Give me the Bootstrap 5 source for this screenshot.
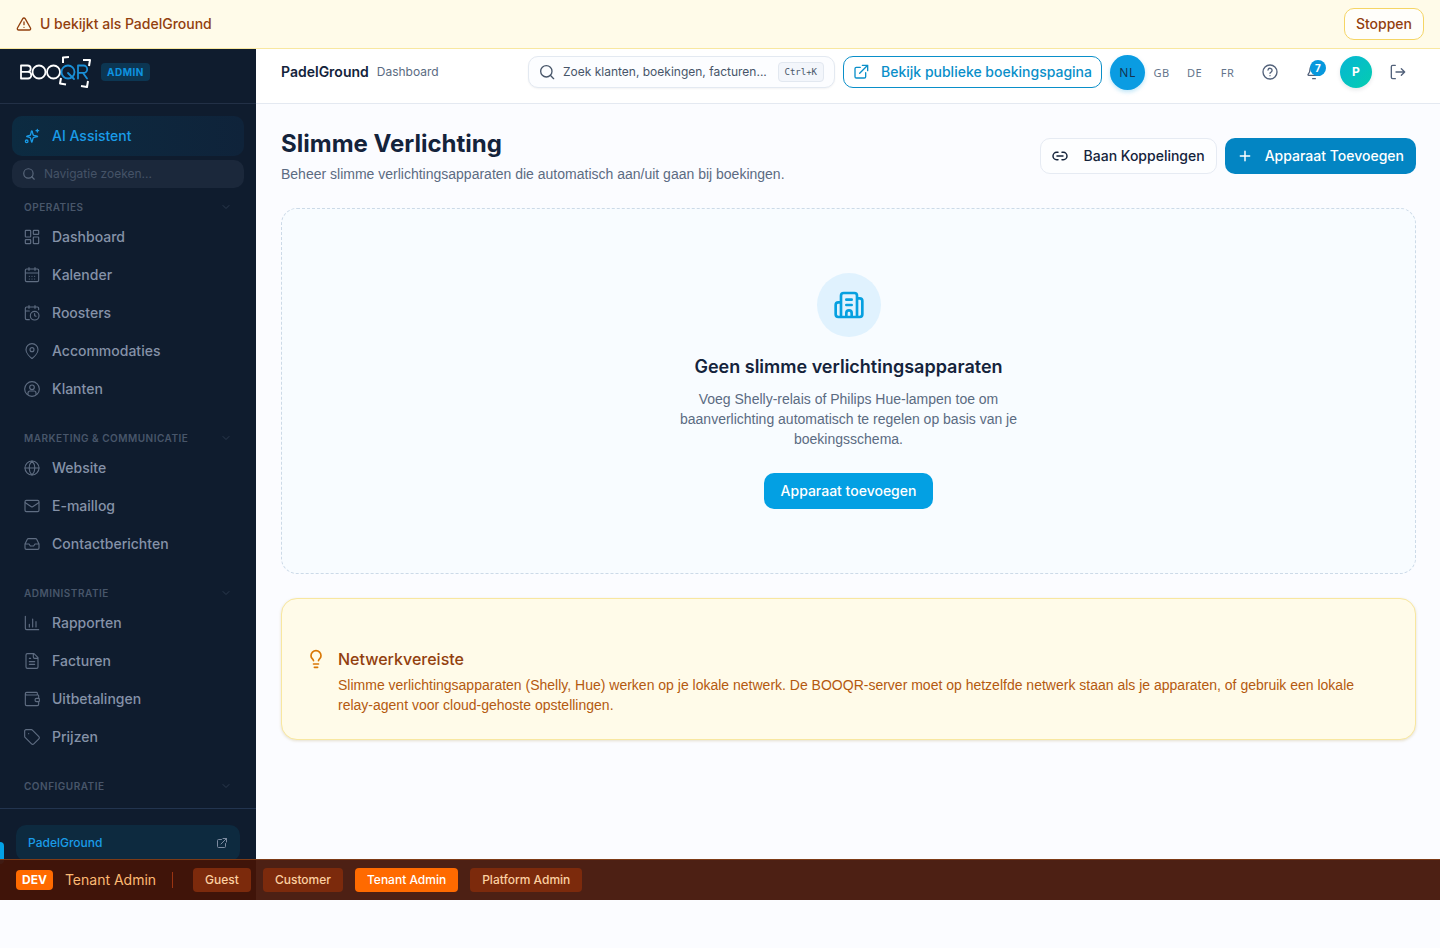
<!DOCTYPE html>
<html lang="nl">
<head>
<meta charset="utf-8">
<meta name="viewport" content="width=device-width, initial-scale=1">
<title>Slimme Verlichting - PadelGround</title>
<link href="https://cdn.jsdelivr.net/npm/bootstrap@5.3.0/dist/css/bootstrap.min.css" rel="stylesheet">
<style>
body{font-family:Inter,"Liberation Sans",sans-serif;font-size:14px;line-height:20px;background:#fbfcff;color:#14233b}
svg{fill:none;stroke:currentColor;stroke-width:1.5;stroke-linecap:round;stroke-linejoin:round;flex:none}
a{text-decoration:none}
.i16{width:16px;height:16px}.i20{width:20px;height:24px}
.copy{font-family:"Liberation Sans",Arial,sans-serif}
.app{height:calc(100vh - 48px);min-height:600px}
.btn{font-size:14px;line-height:20px;font-weight:500;border-radius:10px;white-space:nowrap}
.viewas{background:#fffbe9;border-bottom:1px solid #f8e7a0;color:#92400e;height:49px;font-weight:500}
.btn-stop{height:32px;padding:5px 11px;border-color:#f5d565;background:#fffefa;color:#92400e}
.side{width:256px;background:#0f1c2e;flex:none}
.side-top{height:55px;padding:0 20px 8px 18px;border-bottom:1px solid #223046}
.tag-admin{font-size:10px;line-height:18px;font-weight:700;letter-spacing:.5px;padding:0 6px;height:18px;border-radius:4px;background:#0c3652;color:#0e93e0}
.side-menu{padding:12px 12px 0}
.ai{height:40px;border-radius:10px;padding:0 12px;gap:12px;background:linear-gradient(90deg,#0c2b41,#0f233a);color:#1a9ce8;font-weight:500}
.navsearch{height:28px;margin:4px 0 7px;border-radius:10px;background:#1b283b;color:#5a687c;padding:0 10px;gap:8px}
.navsearch input{background:none;border:0;outline:0;padding:0;font-size:12px;color:#94a3b8;min-width:0}
.navsearch input::placeholder{color:#455367}
.sec{margin-bottom:19px}
.sec-head{height:24px;width:100%;padding:0 12px;border:0;background:none;font-size:10px;font-weight:600;letter-spacing:.5px;color:#48566a}
.sec-head svg{width:12px;height:12px;color:#2b394d}
.item{height:36px;padding:0 12px;gap:12px;color:#8592a8;font-weight:500}
.item svg{color:#5f6d82}
.item+.item{margin-top:2px}
.side-foot{height:92px;padding:16px;border-top:1px solid #22344f}
.tenant{height:36px;border-radius:10px;background:#0d2a3f;padding:0 12px;font-size:12px;color:#1a9ce8;font-weight:500}
.tenant svg{width:12px;height:12px;color:#7d8ba0}
.edge{left:0;bottom:36px;width:4px;height:22px;border-radius:0 4px 4px 0;background:#03a2e6}
.topbar{height:55px;padding:0 24px 8px 25px;border-bottom:1px solid #e4e9f1;background:#fff}
.crumb{font-size:12px}
.find{width:307px;height:32px;border:1px solid #e3e9f1;border-radius:10px;background:#fcfdff;padding:0 10px;gap:8px;color:#475569;box-shadow:0 1px 2px #0f1c2e0d}
.find input{border:0;outline:0;padding:0;background:none;font-size:12px;min-width:0}
.find input::placeholder{color:#475569;opacity:1}
.find kbd{font:9px/18px "DejaVu Sans Mono",monospace;background:#f3f6fb;border:1px solid #e2e8f0;border-radius:4px;color:#475569;padding:0 6px}
.btn-public{height:32px;padding:5px 9px;border-color:#0a8fc9;color:#0a8fc9;background:#fff}
.lang{font:11px/18px "Noto Sans",sans-serif;color:#64748b;width:33px;height:36px;padding:2px 0 0;border:0;background:none;letter-spacing:.5px}
.lang.active{width:35px;height:35px;border-radius:50%;font-size:12px;background:#0a9ce2;color:#14334f;box-shadow:0 2px 4px #0a9ce244}
.tool{width:36px;height:36px;border:0;background:none;color:#52617a;padding:0}
.tool svg{display:block;margin:0 auto}
.count{top:6px;left:14px;width:16px;height:16px;border-radius:50%;background:#0698dd;color:#fff;font-size:10px;line-height:16px;font-weight:700}
.avatar{width:32px;height:32px;border-radius:50%;border:0;background:linear-gradient(135deg,#06b6d4,#04cdb0);color:#fff;font-size:12px;font-weight:700;box-shadow:0 2px 4px #0f1c2e1a}
.page{padding:24px 24px 24px 25px}
h1{font-size:24px;line-height:32px;font-weight:700;margin:0 0 4px}
.sub{color:#5b6b82}
.btn-tall{height:36px;padding:7px 11px}
.btn-link2{border-color:#e6ebf3;background:#fdfeff;color:#14233b;gap:16px}
.btn-add{background:#0385c3;color:#fff;gap:12px}
.btn-add:hover,.btn-main:hover{background:#0279b1;color:#fff}
.btn-main{background:#03a0e3;color:#fff}
.empty{border:1px dashed #ccdae8;border-radius:16px;background:#f8fcff;padding:64px 24px}
.disc{width:64px;height:64px;border-radius:50%;background:#e0f2fe;color:#06a0e0}
.disc svg{width:32px;height:32px;stroke-width:2}
h2{font-size:18px;line-height:28px;font-weight:600;margin:16px 0 8px}
.empty p{max-width:384px;margin:0 0 24px;color:#5b6b82}
.note{border:1px solid #f8e7a0;border-radius:16px;background:#fffbe9;padding:48px 24px 24px;box-shadow:0 1px 3px #92700e33;color:#b4590f}
.note svg{color:#d97706}
h3{font-size:16px;line-height:24px;font-weight:500;margin:0 0 4px;color:#92400e}
.dev{left:0;right:0;bottom:0;height:41px;padding:0 16px;background:#431407f2;border-top:1px solid #7c3a16;color:#fdba74}
.dev-tag{background:#ff6a00;color:#fff;font-size:12px;font-weight:700;height:20px;padding:0 6px;border-radius:4px}
.rule{width:1px;height:16px;background:#9a3412;margin:0 8px}
.role{height:24px;padding:0 12px;border:0;border-radius:4px;background:#7c2a0c;color:#fdcfa0;font-size:12px;line-height:24px;font-weight:500}
.role.active{background:#ff6a00;color:#fff}
</style>
</head>
<body>
<div class="app d-flex flex-column position-relative overflow-hidden">
  <div class="viewas d-flex align-items-center justify-content-between px-3">
    <span class="d-flex align-items-center gap-2"><svg class="i16" viewBox="0 0 24 24"><path stroke-width="2" d="m21.7 18-8-14a2 2 0 0 0-3.500 0l-8 14A2 2 0 0 0 4 21h16a2 2 0 0 0 1.700-3M12 9v4M12 17h.01"/></svg>U bekijkt als PadelGround</span>
    <button class="btn btn-stop" type="button">Stoppen</button>
  </div>
  <div class="d-flex flex-grow-1 overflow-hidden">
    <aside class="side d-flex flex-column position-relative">
      <div class="side-top d-flex align-items-center gap-2">
        <svg width="75" height="34" viewBox="0 0 75 34" role="img" aria-label="BOOQR" style="color:#fff">
          <g stroke-width="1.800"><path d="M3 10.500v13h7a3.300 3.300 0 0 0 0-6.600H3h6.500a3.200 3.200 0 0 0 0-6.400z"/><circle cx="21" cy="17" r="6.500"/><circle cx="35.500" cy="17" r="6.500"/></g>
          <g stroke="#1a8fd6" stroke-width="1.800"><circle cx="50" cy="17" r="6.500"/><path d="m50 18 6 6M60 23.500v-13h5.500a3.700 3.700 0 0 1 0 7.400H60M65 18l4 5.500"/></g>
          <g stroke-width="2" stroke-linecap="butt"><path d="M45 8V2.500l6-.5M65 5h7l-1 6M43 23l-1 5.500 6 1M70 26l-1 6-6-1"/></g>
        </svg>
        <span class="tag-admin">ADMIN</span>
      </div>
      <nav class="side-menu flex-grow-1 overflow-hidden" aria-label="Hoofdmenu">
        <a class="ai d-flex align-items-center" href="#"><svg class="i16" viewBox="0 0 24 24"><path stroke-width="1.900" d="M9.900 15.500a2 2 0 0 0-1.400-1.400l-4-1a.5.5 0 0 1 0-1l4-1a2 2 0 0 0 1.400-1.400l1.300-5a.5.5 0 0 1 1 0l1.300 5a2 2 0 0 0 1.400 1.400l5 1a.5.5 0 0 1 0 1l-5 1a2 2 0 0 0-1.400 1.400l-1.300 5a.5.5 0 0 1-1 0zM20 2v4M22 4h-4M2 20a2 2 0 1 0 4 0 2 2 0 0 0-4 0"/></svg>AI Assistent</a>
        <label class="navsearch d-flex align-items-center"><svg width="14" height="14" viewBox="0 0 24 24"><g stroke-width="2"><circle cx="11" cy="11" r="8"/><path d="m21 21-4.300-4.300"/></g></svg><input class="flex-grow-1" type="text" placeholder="Navigatie zoeken..." aria-label="Navigatie zoeken"></label>
        <div class="sec">
          <button class="sec-head d-flex align-items-center justify-content-between" type="button">OPERATIES<svg viewBox="0 0 24 24"><path stroke-width="2" d="m6 9 6 6 6-6"/></svg></button>
          <a class="item d-flex align-items-center" href="#"><svg class="i16" viewBox="0 0 24 24"><g stroke-width="1.800"><rect x="2" y="2" width="8" height="10" rx="1"/><rect x="14" y="2" width="8" height="6" rx="1"/><rect x="14" y="12" width="8" height="10" rx="1"/><rect x="2" y="16" width="8" height="6" rx="1"/></g></svg>Dashboard</a>
          <a class="item d-flex align-items-center" href="#"><svg class="i16" viewBox="0 0 24 24"><path stroke-width="1.700" d="M7.500 1v4M16.500 1v4M2 9h20M4 3h16a2 2 0 0 1 2 2v15a2 2 0 0 1-2 2H4a2 2 0 0 1-2-2V5a2 2 0 0 1 2-2M8 14h.01M12 14h.01M16 14h.01M8 18h.01M12 18h.01M16 18h.01"/></svg>Kalender</a>
          <a class="item d-flex align-items-center" href="#"><svg class="i16" viewBox="0 0 24 24"><g stroke-width="1.700"><path d="M16 13v3l2 1M16.500 1v4M7.500 1v4M22 7V5a2 2 0 0 0-2-2H4a2 2 0 0 0-2 2v15a2 2 0 0 0 2 2h4M2 9h6"/><circle cx="16" cy="16" r="6.500"/></g></svg>Roosters</a>
          <a class="item d-flex align-items-center" href="#"><svg class="i16" viewBox="0 0 24 24"><g stroke-width="1.700"><path d="M21 10c0 5-6 11-8.400 12.800a1 1 0 0 1-1.200 0C9 21 3 15 3 10a9 9 0 0 1 18 0"/><circle cx="12" cy="10" r="3"/></g></svg>Accommodaties</a>
          <a class="item d-flex align-items-center" href="#"><svg class="i16" viewBox="0 0 24 24"><g stroke-width="1.700"><circle cx="12" cy="12" r="11"/><circle cx="12" cy="9.500" r="3.500"/><path d="M6 20v-2a3 3 0 0 1 3-3h6a3 3 0 0 1 3 3v2"/></g></svg>Klanten</a>
        </div>
        <div class="sec">
          <button class="sec-head d-flex align-items-center justify-content-between" type="button">MARKETING &amp; COMMUNICATIE<svg viewBox="0 0 24 24"><path stroke-width="2" d="m6 9 6 6 6-6"/></svg></button>
          <a class="item d-flex align-items-center" href="#"><svg class="i16" viewBox="0 0 24 24"><g stroke-width="1.700"><circle cx="12" cy="12" r="10.500"/><path d="M12 1.500a15 15 0 0 0 0 21 15 15 0 0 0 0-21M1.500 12h21"/></g></svg>Website</a>
          <a class="item d-flex align-items-center" href="#"><svg class="i16" viewBox="0 0 24 24"><g stroke-width="1.700"><rect x="1.500" y="3.500" width="21" height="17" rx="2"/><path d="m2 7 9 6a2 2 0 0 0 2 0l9-6"/></g></svg>E-maillog</a>
          <a class="item d-flex align-items-center" href="#"><svg class="i16" viewBox="0 0 24 24"><path stroke-width="1.700" d="M22.500 12h-6l-2 3h-5l-2-3h-6M5 5l-3.500 7v6a2 2 0 0 0 2 2h17a2 2 0 0 0 2-2v-6L19 5a2 2 0 0 0-2-1H7a2 2 0 0 0-2 1"/></svg>Contactberichten</a>
        </div>
        <div class="sec">
          <button class="sec-head d-flex align-items-center justify-content-between" type="button">ADMINISTRATIE<svg viewBox="0 0 24 24"><path stroke-width="2" d="m6 9 6 6 6-6"/></svg></button>
          <a class="item d-flex align-items-center" href="#"><svg class="i16" viewBox="0 0 24 24"><path stroke-width="1.700" d="M2 2v18a2 2 0 0 0 2 2h18M8 18v-4M13 18V6M18 18v-8"/></svg>Rapporten</a>
          <a class="item d-flex align-items-center" href="#"><svg class="i16" viewBox="0 0 24 24"><path stroke-width="1.700" d="M15 1H5a2 2 0 0 0-2 2v18a2 2 0 0 0 2 2h14a2 2 0 0 0 2-2V7zM14 1v5a2 2 0 0 0 2 2h5M10 8H8M16 13H8M16 17H8"/></svg>Facturen</a>
          <a class="item d-flex align-items-center" href="#"><svg class="i16" viewBox="0 0 24 24"><path stroke-width="1.700" d="M20 6V3a1 1 0 0 0-1-1H4a2 2 0 0 0 0 4h17a1 1 0 0 1 1 1v4h-3a2.500 2.500 0 0 0 0 5h3a1 1 0 0 0 1-1v-3a1 1 0 0 0-1-1M22 16v4a2 2 0 0 1-2 2H4a2 2 0 0 1-2-2V4"/></svg>Uitbetalingen</a>
          <a class="item d-flex align-items-center" href="#"><svg class="i16" viewBox="0 0 24 24"><path stroke-width="1.700" d="M12.600 1.600A2 2 0 0 0 11.200 1H3a2 2 0 0 0-2 2v8.200a2 2 0 0 0 .6 1.400l9.700 9.700a2.400 2.400 0 0 0 3.400 0l7.600-7.600a2.400 2.400 0 0 0 0-3.400zM7 7h.01"/></svg>Prijzen</a>
        </div>
        <button class="sec-head d-flex align-items-center justify-content-between" type="button">CONFIGURATIE<svg viewBox="0 0 24 24"><path stroke-width="2" d="m6 9 6 6 6-6"/></svg></button>
      </nav>
      <div class="side-foot">
        <a class="tenant d-flex align-items-center justify-content-between" href="#">PadelGround<svg viewBox="0 0 24 24"><path stroke-width="2" d="M14 3h7v7M10 14 21 3M19 13v6a2 2 0 0 1-2 2H5a2 2 0 0 1-2-2V7a2 2 0 0 1 2-2h6"/></svg></a>
      </div>
      <span class="edge position-absolute"></span>
    </aside>
    <div class="flex-grow-1 d-flex flex-column overflow-hidden">
      <header class="topbar d-flex align-items-center gap-2">
        <span class="fw-semibold">PadelGround</span><span class="sub crumb me-auto">Dashboard</span>
        <div class="find d-flex align-items-center"><svg class="i16" viewBox="0 0 24 24"><g stroke-width="2"><circle cx="11" cy="11" r="8.500"/><path d="m22 22-5-5"/></g></svg><input class="flex-grow-1" type="text" placeholder="Zoek klanten, boekingen, facturen..." aria-label="Zoeken"><kbd>Ctrl+K</kbd></div>
        <a class="btn btn-public d-flex align-items-center gap-2" href="#"><svg class="i16 me-1" viewBox="0 0 24 24"><path stroke-width="2" d="M14 2h8v8M10 14 22 2M19 13v6a2 2 0 0 1-2 2H5a2 2 0 0 1-2-2V7a2 2 0 0 1 2-2h6"/></svg>Bekijk publieke boekingspagina</a>
        <div class="d-flex align-items-center">
          <button class="lang active" type="button">NL</button><button class="lang" type="button">GB</button><button class="lang" type="button">DE</button><button class="lang" type="button">FR</button>
        </div>
        <button class="tool" type="button" aria-label="Help"><svg class="i16" viewBox="0 0 24 24"><g stroke-width="2"><circle cx="12" cy="12" r="10.500"/><path d="M9 9a3 3 0 0 1 6 1c0 2-3 2.500-3 4M12 17.500h.01"/></g></svg></button>
        <button class="tool position-relative" type="button" aria-label="Meldingen"><svg class="i16" viewBox="0 0 24 24"><path stroke-width="2" d="M10 22h4M3.300 15.300A1 1 0 0 0 4 17h16a1 1 0 0 0 .7-1.700C19.400 14 18 12.500 18 8A6 6 0 0 0 6 8c0 4.500-1.400 6-2.700 7.300"/></svg><span class="count position-absolute">7</span></button>
        <button class="avatar" type="button">P</button>
        <button class="tool" type="button" aria-label="Uitloggen"><svg class="i16" viewBox="0 0 24 24"><path stroke-width="2" d="M8 22H4a2 2 0 0 1-2-2V4a2 2 0 0 1 2-2h4M17 17l5-5-5-5M22 12H9"/></svg></button>
      </header>
      <main class="page flex-grow-1 overflow-auto">
        <div class="d-flex align-items-center justify-content-between mb-4">
          <div><h1>Slimme Verlichting</h1><div class="sub copy">Beheer slimme verlichtingsapparaten die automatisch aan/uit gaan bij boekingen.</div></div>
          <div class="d-flex gap-2">
            <button class="btn btn-tall btn-link2 d-flex align-items-center" type="button"><svg class="i16" viewBox="0 0 24 24"><path stroke-width="2.200" d="M9 17.500H7a5.500 5.500 0 0 1 0-11h2M15 6.500h2a5.500 5.500 0 0 1 0 11h-2M7.500 12h9"/></svg>Baan Koppelingen</button>
            <button class="btn btn-tall btn-add d-flex align-items-center" type="button"><svg class="i16" viewBox="0 0 24 24"><path stroke-width="2.200" d="M5 12h14M12 5v14"/></svg>Apparaat Toevoegen</button>
          </div>
        </div>
        <section class="empty d-flex flex-column align-items-center text-center mb-4">
          <div class="disc d-flex align-items-center justify-content-center"><svg viewBox="0 0 24 24"><path d="M14 21v-3a2 2 0 0 0-4 0v3M10 12h4M10 8h4M6 10H4a2 2 0 0 0-2 2v7a2 2 0 0 0 2 2h16a2 2 0 0 0 2-2V9a2 2 0 0 0-2-2h-2M6 21V5a2 2 0 0 1 2-2h8a2 2 0 0 1 2 2v16"/></svg></div>
          <h2>Geen slimme verlichtingsapparaten</h2>
          <p class="copy">Voeg Shelly-relais of Philips Hue-lampen toe om baanverlichting automatisch te regelen op basis van je boekingsschema.</p>
          <button class="btn btn-tall btn-main px-3" type="button">Apparaat toevoegen</button>
        </section>
        <section class="note d-flex">
          <svg class="i20 me-2" viewBox="0 0 24 24"><path stroke-width="2" d="M15 14c.2-1 .7-1.700 1.500-2.500 1-.9 1.500-2.200 1.500-3.500A6 6 0 0 0 6 8c0 1 .2 2.200 1.500 3.500.7.7 1.300 1.500 1.500 2.500M9 18h6M10 22h4"/></svg>
          <div class="ms-1"><h3>Netwerkvereiste</h3><div class="copy">Slimme verlichtingsapparaten (Shelly, Hue) werken op je lokale netwerk. De BOOQR-server moet op hetzelfde netwerk staan als je apparaten, of gebruik een lokale <span class="text-nowrap">relay-agent</span> voor cloud-gehoste opstellingen.</div></div>
        </section>
      </main>
    </div>
  </div>
  <div class="dev position-absolute d-flex align-items-center">
    <span class="dev-tag me-2">DEV</span><span class="ms-1 me-2">Tenant Admin</span><span class="rule me-3"></span>
    <div class="d-flex gap-2 ms-1">
      <button class="role me-1" type="button">Guest</button><button class="role me-1" type="button">Customer</button><button class="role active me-1" type="button">Tenant Admin</button><button class="role" type="button">Platform Admin</button>
    </div>
  </div>
</div>
<script src="https://cdn.jsdelivr.net/npm/bootstrap@5.3.0/dist/js/bootstrap.bundle.min.js"></script>
</body>
</html>
